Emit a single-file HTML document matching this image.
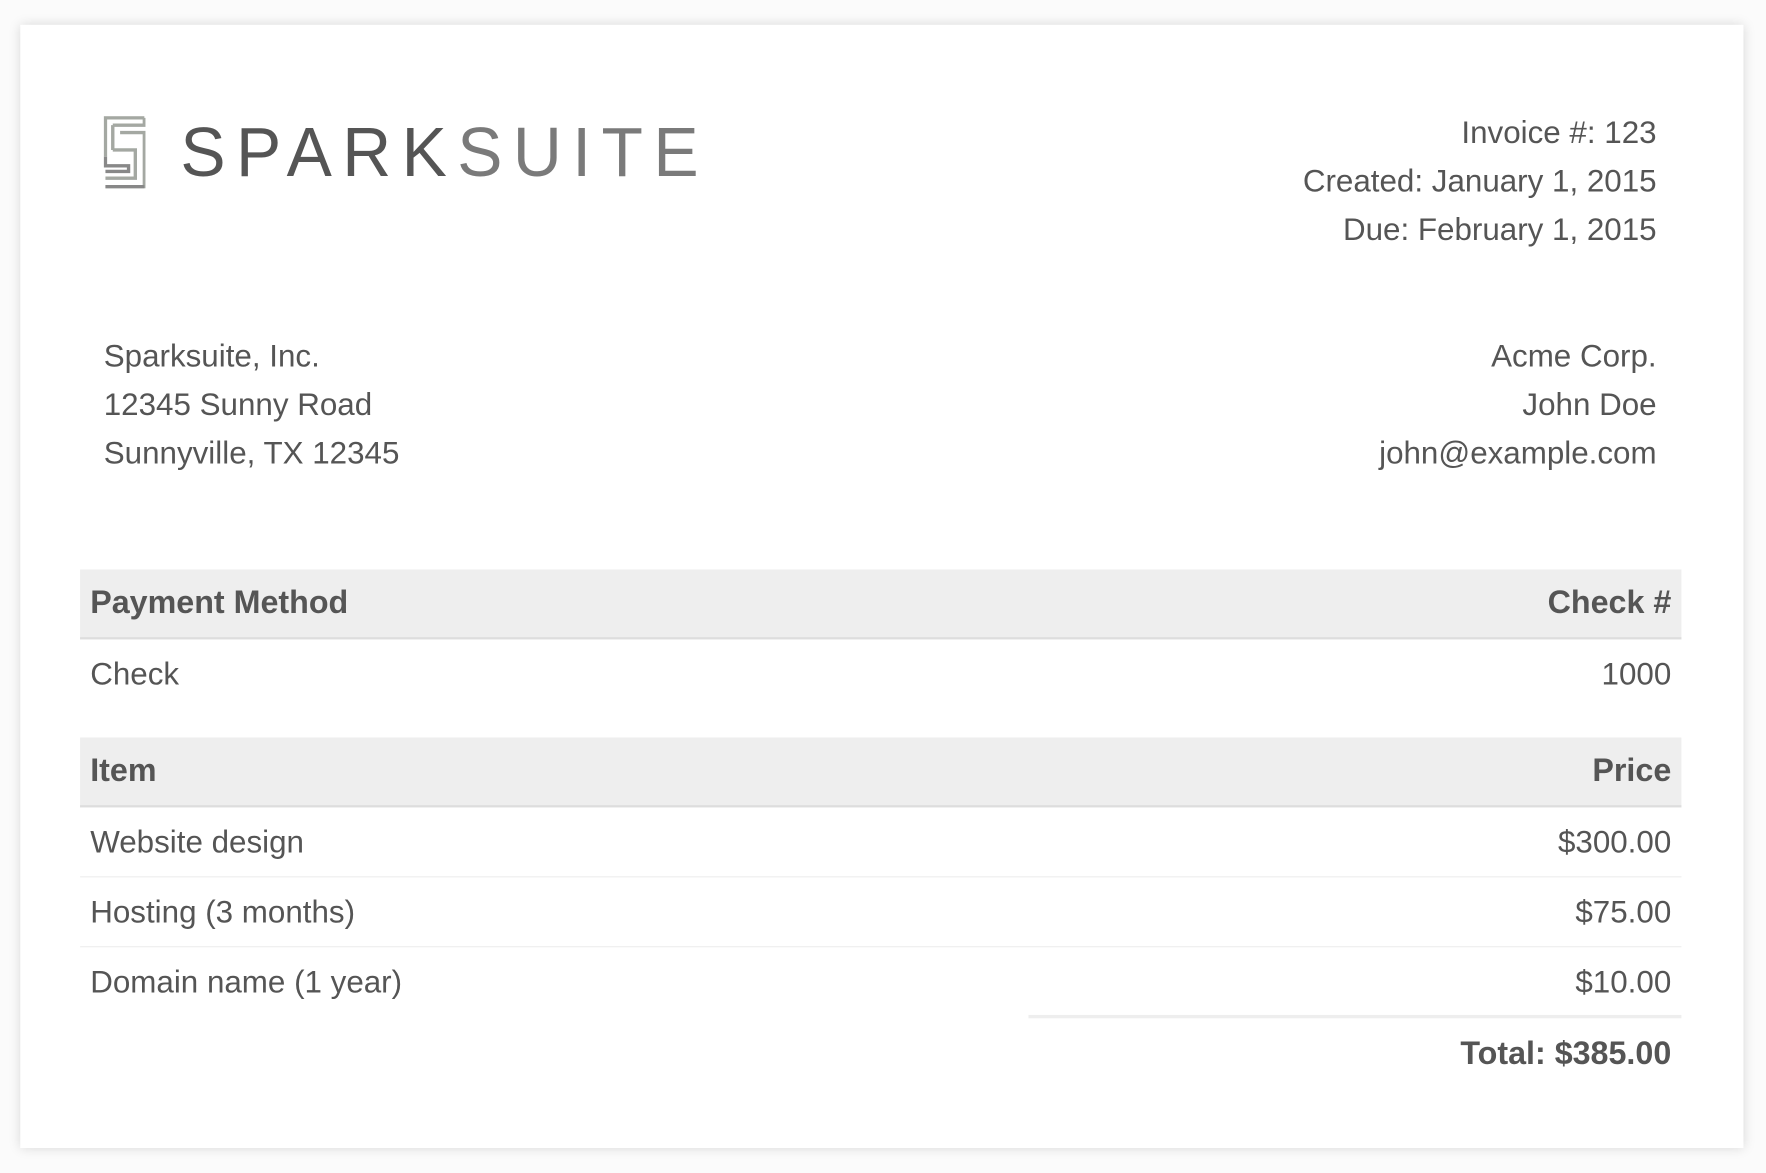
<!DOCTYPE html>
<html><head><style>
html,body{margin:0;padding:0;background:#fbfbfb;width:1766px;height:1172px;overflow:hidden}
#w{position:absolute;left:0;top:0;width:1566px;height:1040px;transform:scale(1.12771);transform-origin:0 0;font-family:"Liberation Sans",Arial,sans-serif;color:#555;font-size:27.8px}
.card{position:absolute;left:18px;top:22px;width:1528px;height:996px;background:#fff;box-shadow:0 0 10px rgba(0,0,0,.15)}
.t{position:absolute;white-space:nowrap;line-height:43px}
.r{text-align:right}
.row{position:absolute;left:71px;width:1420px}
.hd{background:#eee;border-bottom:2px solid #ddd;height:60px;font-weight:bold;font-size:28.6px}
.row span{position:absolute;top:50%;transform:translateY(-50%)}
.row .a{left:9px}.row .b{right:9px}
.ln{border-bottom:1px solid #eee}
</style></head><body><div id="w">
<div class="card"></div>
<svg style="position:absolute;left:92px;top:103px" width="37" height="64" viewBox="0 0 37 64">
<g fill="none" stroke-width="3">
<path d="M1.5 0V36M1.5 1.5H36M8 8H36V1.5M8 8V30M8 30H28V55H1.5M14.5 14.5H36V62.5H1.5" stroke="#a4a8a2"/>
<path d="M1.5 36V44H22V49H1.5M1.5 62.5H36" stroke="#888"/>
</g></svg>
<div class="t" style="left:160px;top:96px;font-size:62px;line-height:80px;letter-spacing:9.5px;transform:scaleX(0.97);transform-origin:0 0"><span style="color:#555">SPARK</span><span style="color:#7a7a7a">SUITE</span></div>
<div class="t r" style="right:97px;top:96px">Invoice #: 123<br>Created: January 1, 2015<br>Due: February 1, 2015</div>
<div class="t" style="left:92px;top:294px">Sparksuite, Inc.<br>12345 Sunny Road<br>Sunnyville, TX 12345</div>
<div class="t r" style="right:97px;top:294px">Acme Corp.<br>John Doe<br>john@example.com</div>
<div class="row hd" style="top:505px"><span class="a">Payment Method</span><span class="b">Check #</span></div>
<div class="row" style="top:568px;height:60px"><span class="a">Check</span><span class="b">1000</span></div>
<div class="row hd" style="top:654px"><span class="a">Item</span><span class="b">Price</span></div>
<div class="row ln" style="top:717px;height:60px"><span class="a">Website design</span><span class="b">$300.00</span></div>
<div class="row ln" style="top:778px;height:61px"><span class="a">Hosting (3 months)</span><span class="b">$75.00</span></div>
<div class="row" style="top:840px;height:61px"><span class="a">Domain name (1 year)</span><span class="b">$10.00</span></div>
<div style="position:absolute;left:912px;top:900px;width:579px;height:3px;background:#eee"></div>
<div class="row" style="top:905px;height:60px;font-weight:bold;font-size:28.6px"><span class="b">Total: $385.00</span></div>
</div></body></html>
